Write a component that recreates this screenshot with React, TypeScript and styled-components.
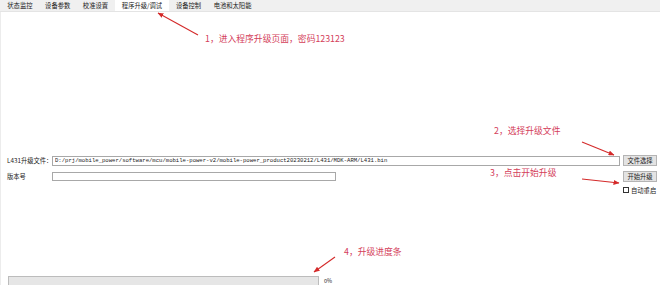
import styled, { createGlobalStyle } from 'styled-components'

const GlobalStyle = createGlobalStyle`
  html, body { margin: 0; padding: 0; background: #fff; }
  body { font-family: "Noto Sans CJK SC", "Liberation Sans", sans-serif; }
`

const tabs = ['状态监控', '设备参数', '校准设置', '程序升级/调试', '设备控制', '电池和太阳能']
const filePath = 'D:/prj/mobile_power/software/mcu/mobile-power-v2/mobile-power_product20230212/L431/MDK-ARM/L431.bin'

const notes = [
  { text: '1，进入程序升级页面，密码123123', x: 205, y: 33 },
  { text: '2，选择升级文件', x: 494, y: 125 },
  { text: '3，点击开始升级', x: 490, y: 167 },
  { text: '4，升级进度条', x: 344, y: 246 },
]

const arrows = [
  { x1: 198, y1: 35, x2: 158, y2: 13 },
  { x1: 582, y1: 142, x2: 614, y2: 155 },
  { x1: 582, y1: 179, x2: 619, y2: 183 },
  { x1: 335, y1: 257, x2: 314, y2: 272 },
]

export default function App() {
  return (
    <>
      <GlobalStyle />
      <Page>
        <TabBar>
          {tabs.map((t, i) => (
            <Tab key={t} active={i === 3}>{t}</Tab>
          ))}
        </TabBar>
        <Content>
          <Form>
            <Row>
              <Label>L431升级文件：</Label>
              <PathInput readOnly value={filePath} />
              <Button>文件选择</Button>
            </Row>
            <Row>
              <Label>版本号</Label>
              <VersionInput readOnly value="" />
              <Spacer />
              <Button>开始升级</Button>
            </Row>
            <CheckRow>
              <Box />
              <CheckText>自动重启</CheckText>
            </CheckRow>
          </Form>
          <ProgressRow>
            <ProgressBar />
            <Percent>0%</Percent>
          </ProgressRow>
        </Content>
        <Overlay>
          {notes.map((n) => (
            <Note key={n.text} style={{ left: n.x, top: n.y }}>{n.text}</Note>
          ))}
          <ArrowLayer width="660" height="285" viewBox="0 0 660 285">
            <defs>
              <marker id="head" markerWidth="6" markerHeight="5" refX="5.5" refY="2.5" orient="auto" markerUnits="userSpaceOnUse">
                <path d="M0,0 L6,2.5 L0,5 Z" fill="#d42a2a" />
              </marker>
            </defs>
            {arrows.map((a, i) => (
              <line key={i} x1={a.x1} y1={a.y1} x2={a.x2} y2={a.y2} stroke="#d42a2a" strokeWidth="1.1" markerEnd="url(#head)" />
            ))}
          </ArrowLayer>
        </Overlay>
      </Page>
    </>
  )
}

const Page = styled.div`
  position: relative;
  width: 660px;
  height: 285px;
  display: flex;
  flex-direction: column;
  overflow: hidden;
`

const TabBar = styled.div`
  height: 12px;
  display: flex;
  align-items: stretch;
  padding-left: 1px;
  background: #f0f0f0;
  border-bottom: 1px solid #e4e4e4;
  box-sizing: border-box;
`

const Tab = styled.div<{ active?: boolean }>`
  display: flex;
  align-items: center;
  padding: 0 ${(p) => (p.active ? '6.5px' : '6.3px')};
  margin: 0 ${(p) => (p.active ? '1px' : '0')};
  font-size: 6.3px;
  color: #222;
  background: ${(p) => (p.active ? '#fff' : 'transparent')};
  white-space: nowrap;
`

const Content = styled.div`
  flex: 1;
  display: flex;
  flex-direction: column;
  padding: 143px 3px 0 6px;
  border-left: 1px solid #ececec;
  box-sizing: border-box;
`

const Form = styled.div`
  display: flex;
  flex-direction: column;
  gap: 5px;
`

const Row = styled.div`
  display: flex;
  align-items: center;
  height: 11px;
`

const Label = styled.div`
  width: 45px;
  flex: none;
  font-size: 6.3px;
  color: #222;
  white-space: nowrap;
`

const PathInput = styled.input`
  flex: 1;
  height: 10px;
  margin: 0 3px 0 0;
  padding: 0 2px;
  box-sizing: border-box;
  border: 1px solid #a8a8a8;
  font-family: "Liberation Mono", monospace;
  font-size: 5.6px;
  color: #222;
  outline: none;
`

const VersionInput = styled(PathInput)`
  flex: none;
  width: 284px;
  height: 9px;
`

const Spacer = styled.div`
  flex: 1;
`

const Button = styled.div`
  width: 34px;
  height: 11px;
  flex: none;
  display: flex;
  align-items: center;
  justify-content: center;
  box-sizing: border-box;
  border: 1px solid #b4b4b4;
  background: #e3e3e3;
  font-size: 6.3px;
  color: #222;
`

const CheckRow = styled.div`
  display: flex;
  align-items: center;
  justify-content: flex-end;
  gap: 2px;
  margin-top: -1px;
  height: 8px;
`

const Box = styled.div`
  width: 6px;
  height: 6px;
  border: 1px solid #333;
  background: #fff;
  box-sizing: border-box;
`

const CheckText = styled.div`
  font-size: 6.3px;
  color: #222;
  width: 26px;
`

const ProgressRow = styled.div`
  margin-top: auto;
  display: flex;
  align-items: center;
  gap: 5px;
  padding-left: 1px;
  height: 9px;
`

const ProgressBar = styled.div`
  width: 311px;
  height: 9px;
  box-sizing: border-box;
  background: #e6e6e6;
  border: 1px solid #bcbcbc;
  border-bottom: none;
`

const Percent = styled.div`
  font-size: 5.5px;
  color: #222;
`

const Overlay = styled.div`
  position: absolute;
  inset: 0;
  pointer-events: none;
`

const Note = styled.div`
  position: absolute;
  font-size: 8.8px;
  color: #d4405a;
  white-space: nowrap;
  line-height: 12px;
`

const ArrowLayer = styled.svg`
  position: absolute;
  left: 0;
  top: 0;
`
